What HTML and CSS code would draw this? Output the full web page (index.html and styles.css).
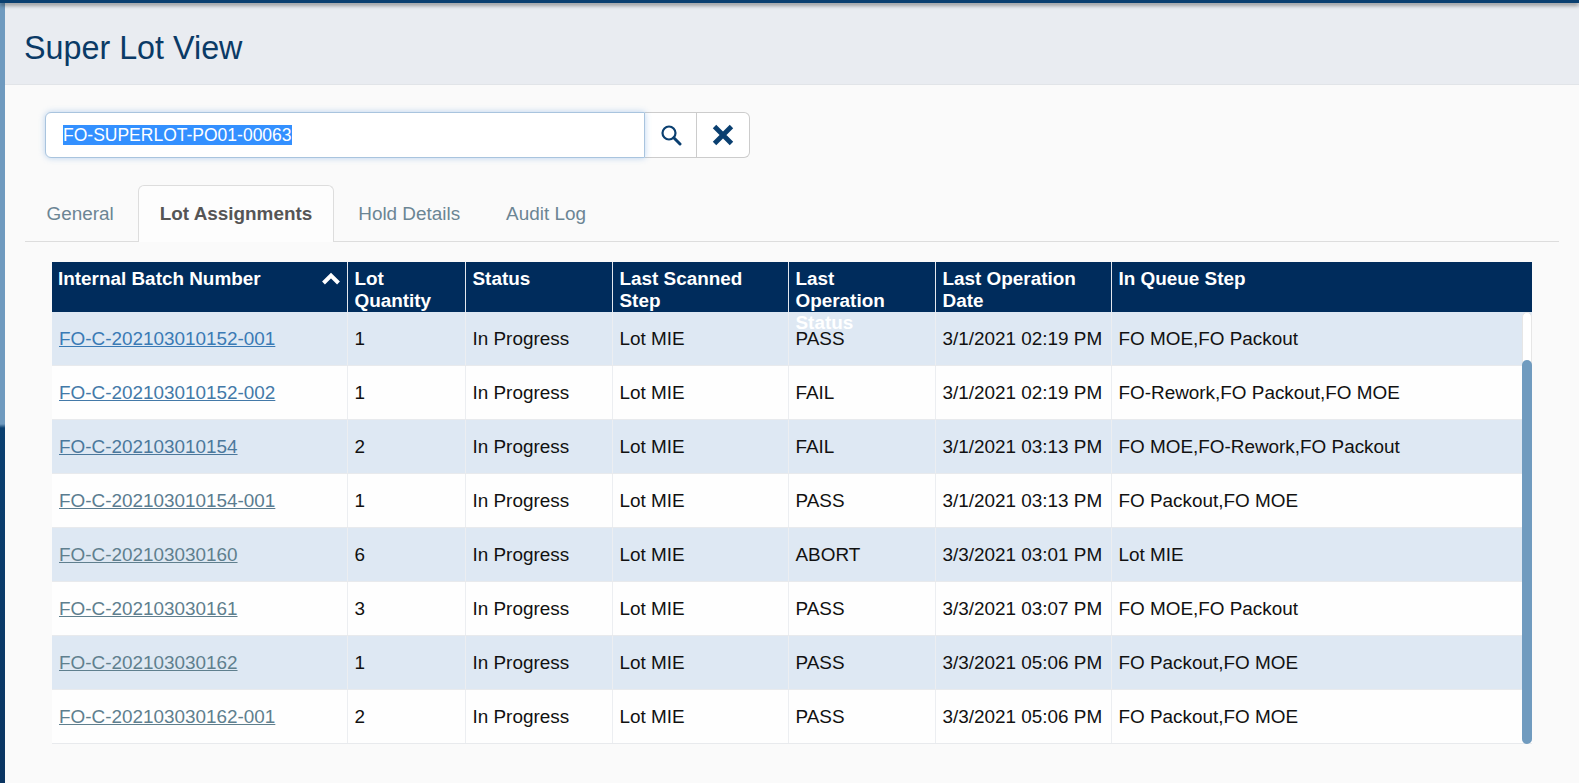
FILE: index.html
```html
<!DOCTYPE html>
<html lang="en-us">
  <head>
    <meta charset="utf-8" />
    <title>Super Lot View</title>
    <link rel="stylesheet" href="styles.css">
  </head>
  <body>
    <div class="topbar"></div>
    <div class="page">
      <div class="rail"></div>
      <main class="content">
        <header class="title-bar">
          <h1>Super Lot View</h1>
        </header>

        <div class="search">
          <div class="search-input"><span class="selected">FO-SUPERLOT-PO01-00063</span></div>
          <button class="search-btn" type="button" aria-label="Search">
            <svg width="22" height="22" viewBox="0 0 22 22">
              <circle cx="9" cy="9" r="6.5" fill="none" stroke="#0a3f70" stroke-width="2.2" />
              <path d="M13.8 13.8 L20 20" stroke="#0a3f70" stroke-width="3" stroke-linecap="round" />
            </svg>
          </button>
          <button class="search-btn clear-btn" type="button" aria-label="Clear">
            <svg width="22" height="22" viewBox="0 0 22 22">
              <path d="M3.5 3.5 L18.5 18.5 M18.5 3.5 L3.5 18.5" stroke="#0a3f70" stroke-width="5.4" stroke-linecap="square" transform="translate(11 11) scale(.9) translate(-11 -11)" />
            </svg>
          </button>
        </div>

        <nav class="tabs">
          <a class="tab">General</a>
          <a class="tab active">Lot Assignments</a>
          <a class="tab">Hold Details</a>
          <a class="tab">Audit Log</a>
        </nav>

        <div class="grid">
          <table class="grid-head">
            <colgroup>
              <col class="c1"><col class="c2"><col class="c3"><col class="c4"><col class="c5"><col class="c6"><col>
            </colgroup>
            <tr>
              <th>
                <div class="th-inner">Internal Batch Number
                  <svg class="sort" width="20" height="14" viewBox="0 0 20 14">
                    <path d="M2.5 11 L10 3.5 L17.5 11" fill="none" stroke="#fff" stroke-width="4" />
                  </svg>
                </div>
              </th>
              <th><div class="th-inner">Lot Quantity</div></th>
              <th><div class="th-inner">Status</div></th>
              <th><div class="th-inner">Last Scanned Step</div></th>
              <th><div class="th-inner">Last Operation Status</div></th>
              <th><div class="th-inner">Last Operation Date</div></th>
              <th><div class="th-inner">In Queue Step</div></th>
            </tr>
          </table>
          <table class="grid-body">
            <colgroup>
              <col class="c1"><col class="c2"><col class="c3"><col class="c4"><col class="c5"><col class="c6"><col>
            </colgroup>
            <tr><td><a class="l1">FO-C-202103010152-001</a></td><td>1</td><td>In Progress</td><td>Lot MIE</td><td>PASS</td><td>3/1/2021 02:19 PM</td><td>FO MOE,FO Packout</td></tr>
            <tr><td><a class="l2">FO-C-202103010152-002</a></td><td>1</td><td>In Progress</td><td>Lot MIE</td><td>FAIL</td><td>3/1/2021 02:19 PM</td><td>FO-Rework,FO Packout,FO MOE</td></tr>
            <tr><td><a class="l3">FO-C-202103010154</a></td><td>2</td><td>In Progress</td><td>Lot MIE</td><td>FAIL</td><td>3/1/2021 03:13 PM</td><td>FO MOE,FO-Rework,FO Packout</td></tr>
            <tr><td><a class="l4">FO-C-202103010154-001</a></td><td>1</td><td>In Progress</td><td>Lot MIE</td><td>PASS</td><td>3/1/2021 03:13 PM</td><td>FO Packout,FO MOE</td></tr>
            <tr><td><a class="l5">FO-C-202103030160</a></td><td>6</td><td>In Progress</td><td>Lot MIE</td><td>ABORT</td><td>3/3/2021 03:01 PM</td><td>Lot MIE</td></tr>
            <tr><td><a class="l5">FO-C-202103030161</a></td><td>3</td><td>In Progress</td><td>Lot MIE</td><td>PASS</td><td>3/3/2021 03:07 PM</td><td>FO MOE,FO Packout</td></tr>
            <tr><td><a class="l5">FO-C-202103030162</a></td><td>1</td><td>In Progress</td><td>Lot MIE</td><td>PASS</td><td>3/3/2021 05:06 PM</td><td>FO Packout,FO MOE</td></tr>
            <tr><td><a class="l5">FO-C-202103030162-001</a></td><td>2</td><td>In Progress</td><td>Lot MIE</td><td>PASS</td><td>3/3/2021 05:06 PM</td><td>FO Packout,FO MOE</td></tr>
          </table>
          <div class="scroll-track"><div class="scroll-thumb"></div></div>
        </div>
      </main>
    </div>
  </body>
</html>
```

FILE: styles.css
```css
html, body {
  margin: 0;
  padding: 0;
  height: 100%;
  overflow: hidden;
}

body {
  font-family: "Liberation Sans", Arial, sans-serif;
  font-size: 18.9px;
  color: #111;
  background-color: #fafafa;
}

.topbar {
  height: 3px;
  background-color: #0a3f70;
  box-shadow: 0 2px 4px rgba(0, 0, 0, .55);
  position: relative;
  z-index: 2;
}

.page {
  display: flex;
  height: 780px;
}

.rail {
  width: 5px;
  flex: none;
  background: linear-gradient(#6f9abf 0, #6f9abf 421px, #0a3f70 425px, #0a3562 100%);
}

.content {
  flex: 1;
  min-width: 0;
}

.title-bar {
  height: 82px;
  box-sizing: border-box;
  background-color: #e9ecf1;
  border-bottom: 1px solid #e1e4e8;
  padding: 9px 0 0 19px;
  display: flex;
  align-items: center;
}

h1 {
  margin: 0;
  font-size: 32.3px;
  font-weight: 400;
  color: #0a3a66;
}

.search {
  display: flex;
  margin: 27px 0 0 40px;
  height: 46px;
  width: 705px;
}

.search-input {
  flex: 1;
  box-sizing: border-box;
  background-color: #fff;
  border: 1px solid #a9c4de;
  border-radius: 6px 0 0 6px;
  box-shadow: 0 0 6px rgba(102, 160, 225, .45);
  padding-left: 17px;
  display: flex;
  align-items: center;
  position: relative;
  z-index: 1;
  font-size: 17.5px;
}

.selected {
  background-color: #3390ff;
  color: #fff;
  line-height: 20px;
}

.search-btn {
  width: 52px;
  padding: 0;
  background-color: #fff;
  border: 1px solid #ccc;
  border-left: 0;
  display: flex;
  align-items: center;
  justify-content: center;
}

.clear-btn {
  width: 53px;
  border-radius: 0 6px 6px 0;
}

.tabs {
  display: flex;
  gap: 2px;
  margin: 27px 20px 0 19.5px;
  height: 57px;
  box-sizing: border-box;
  border-bottom: 1px solid #ddd;
}

.tab {
  height: 57px;
  box-sizing: border-box;
  padding: 0 21px;
  display: flex;
  align-items: center;
  color: #6b8594;
  border: 1px solid transparent;
  border-bottom: 0;
}

.tab.active {
  font-weight: 700;
  color: #555;
  background-color: #fdfdfd;
  border-color: #ddd;
  border-radius: 6px 6px 0 0;
}

.grid {
  position: relative;
  margin: 20px 0 0 47px;
  width: 1480px;
}

table {
  border-collapse: collapse;
  table-layout: fixed;
  width: 100%;
}

.c1 { width: 295px; }
.c2 { width: 118px; }
.c3 { width: 147px; }
.c4 { width: 176px; }
.c5 { width: 147px; }
.c6 { width: 176px; }

.grid-head {
  position: relative;
  z-index: 1;
  background-color: #002c5c;
}

.grid-head th {
  height: 50px;
  padding: 0;
  color: #fff;
  font-size: 18.9px;
  font-weight: 700;
  line-height: 22px;
  text-align: left;
  vertical-align: top;
  border-right: 1px solid #e4e8ee;
}

.grid-head th:last-child {
  border-right: 0;
}

.th-inner {
  height: 50px;
  box-sizing: border-box;
  padding: 6px 7px 0;
  position: relative;
}

th:first-child .th-inner {
  padding-left: 6px;
}

.sort {
  position: absolute;
  right: 6px;
  top: 10px;
}

.grid-body td {
  height: 53.875px;
  box-sizing: border-box;
  padding: 1px 7px 0;
  border-right: 1px solid #eceef1;
  border-bottom: 1px solid #e8eaed;
  white-space: nowrap;
}

.grid-body tr:nth-child(odd) {
  background-color: #dee8f3;
}

.grid-body tr:nth-child(even) {
  background-color: #fefefe;
}

.grid-body td:last-child {
  border-right: 0;
}

.grid-body a {
  text-decoration: underline;
}

.l1 { color: #3a7ab5; }
.l2 { color: #4379a8; }
.l3 { color: #4b789c; }
.l4 { color: #5a7c90; }
.l5 { color: #5f7f8e; }

.scroll-track {
  position: absolute;
  right: 0;
  top: 50px;
  bottom: 0;
  width: 10px;
  box-sizing: border-box;
  background-color: #fff;
  border: 1px solid #e6e6e6;
  border-radius: 5px;
  z-index: 1;
}

.scroll-thumb {
  position: absolute;
  left: -1px;
  right: -1px;
  top: 47px;
  bottom: -1px;
  background-color: #709bbf;
  border-radius: 5px;
}
```
